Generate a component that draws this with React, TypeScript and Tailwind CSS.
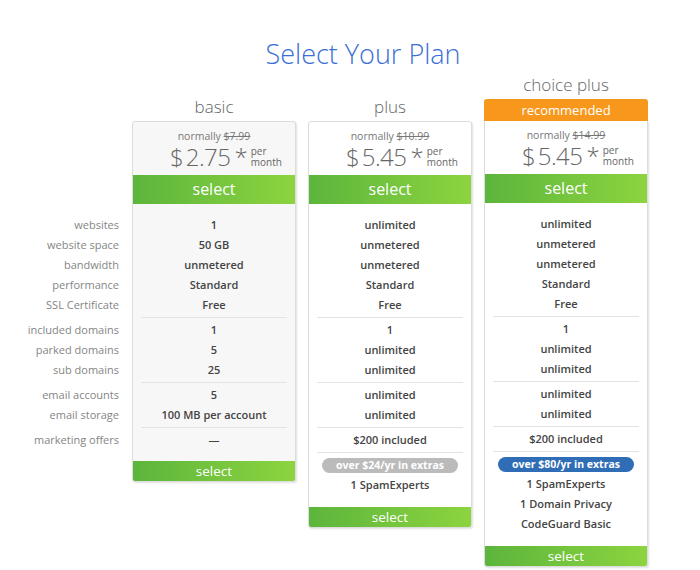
import React from 'react';

type Plan = {
  name: string;
  normally: string;
  price: string;
  recommended?: boolean;
  muted?: boolean;
  groups: string[][];
  pill?: { text: string; tone: 'gray' | 'blue' };
  extras: string[];
};

const labels: string[][] = [
  ['websites', 'website space', 'bandwidth', 'performance', 'SSL Certificate'],
  ['included domains', 'parked domains', 'sub domains'],
  ['email accounts', 'email storage'],
  ['marketing offers'],
];

const plans: Plan[] = [
  {
    name: 'basic',
    normally: '$7.99',
    price: '2.75',
    muted: true,
    groups: [
      ['1', '50 GB', 'unmetered', 'Standard', 'Free'],
      ['1', '5', '25'],
      ['5', '100 MB per account'],
      ['—'],
    ],
    extras: [],
  },
  {
    name: 'plus',
    normally: '$10.99',
    price: '5.45',
    groups: [
      ['unlimited', 'unmetered', 'unmetered', 'Standard', 'Free'],
      ['1', 'unlimited', 'unlimited'],
      ['unlimited', 'unlimited'],
      ['$200 included'],
    ],
    pill: { text: 'over $24/yr in extras', tone: 'gray' },
    extras: ['1 SpamExperts'],
  },
  {
    name: 'choice plus',
    normally: '$14.99',
    price: '5.45',
    recommended: true,
    groups: [
      ['unlimited', 'unmetered', 'unmetered', 'Standard', 'Free'],
      ['1', 'unlimited', 'unlimited'],
      ['unlimited', 'unlimited'],
      ['$200 included'],
    ],
    pill: { text: 'over $80/yr in extras', tone: 'blue' },
    extras: ['1 SpamExperts', '1 Domain Privacy', 'CodeGuard Basic'],
  },
];

const green = 'bg-gradient-to-r from-[#5cb53c] to-[#8cd43f]';

function Divider({ hidden }: { hidden?: boolean }) {
  return <div className={`my-[2px] mx-2 h-px ${hidden ? '' : 'bg-[#e3e3e3]'}`} />;
}

function PlanCard({ plan }: { plan: Plan }) {
  return (
    <div className="w-[164px] flex flex-col">
      {/* header */}
      <div className="h-[49px] flex flex-col justify-end">
        <div className="text-center text-[17px] font-light text-[#666] leading-[26px] mb-[1px]">{plan.name}</div>
        {plan.recommended && (
          <div className="h-[22px] bg-[#f7981d] rounded-t-[3px] text-white text-[13px] leading-[22px] text-center">
            recommended
          </div>
        )}
      </div>

      <div
        className={`border border-[#dcdcdc] ${plan.recommended ? 'border-t-0' : 'rounded-t-[3px]'} rounded-b-[3px] overflow-hidden shadow-[1px_1px_2px_rgba(0,0,0,0.12)] ${plan.muted ? 'bg-[#f7f7f7]' : 'bg-white'}`}
      >
        <div className="pt-[6px] pb-[5px] text-center">
          <div className="text-[10.5px] leading-[16px] text-[#777]">
            normally <span className="line-through">{plan.normally}</span>
          </div>
          <div className="flex items-start pl-[37px] h-[26px] text-[#666] font-light">
            <span className="text-[24px] leading-[26px]">$</span>
            <span className="text-[24px] leading-[26px] ml-[2px] tracking-[-0.5px]">{plan.price}</span>
            <span className="text-[24px] leading-[26px] ml-[4px]">*</span>
            <span className="ml-[3px] text-[10px] leading-[11px] text-left mt-[2px] font-normal">
              per
              <br />
              month
            </span>
          </div>
        </div>
        <div className={`${green} h-[29px] text-center text-white text-[16px] leading-[29px]`}>select</div>

        <div className="pt-[11px] pb-[11px]">
          {plan.groups.map((g, gi) => (
            <div key={gi}>
              {gi > 0 && <Divider />}
              {g.map((v, i) => (
                <div key={i} className="h-5 leading-5 text-center text-[11px] font-semibold text-[#444]">
                  {v}
                </div>
              ))}
            </div>
          ))}
          {plan.pill && (
            <>
              <Divider />
              <div className="h-5 flex items-center justify-center">
                <div
                  className={`w-[136px] h-[15px] rounded-full text-white text-[10.5px] font-bold leading-[15px] text-center ${
                    plan.pill.tone === 'blue' ? 'bg-[#2f6db6]' : 'bg-[#bbbbbb]'
                  }`}
                >
                  {plan.pill.text}
                </div>
              </div>
              {plan.extras.map((e, i) => (
                <div key={i} className="h-5 leading-5 text-center text-[11px] font-semibold text-[#444]">
                  {e}
                </div>
              ))}
              <div className="h-px" />
            </>
          )}
        </div>
        <div className={`${green} h-5 text-center text-white text-[13.5px] leading-5`}>select</div>
      </div>
    </div>
  );
}

export default function App() {
  return (
    <div className="w-[700px] h-[570px] bg-white font-['Open_Sans',sans-serif] overflow-hidden">
      <h1 className="pt-[36px] pl-[26px] text-center text-[27px] leading-[36px] font-light text-[#3a6fd6]">
        Select Your Plan
      </h1>
      <div className="flex">
        <div className="w-[119px] pt-[143px] text-right">
          {labels.map((g, gi) => (
            <div key={gi}>
              {gi > 0 && <Divider hidden />}
              {g.map((l) => (
                <div key={l} className="h-5 leading-5 text-[11px] text-[#858585] whitespace-nowrap">
                  {l}
                </div>
              ))}
            </div>
          ))}
        </div>
        <div className="ml-[13px] flex gap-[12px] items-start">
          {plans.map((p) => (
            <PlanCard key={p.name} plan={p} />
          ))}
        </div>
      </div>
    </div>
  );
}
